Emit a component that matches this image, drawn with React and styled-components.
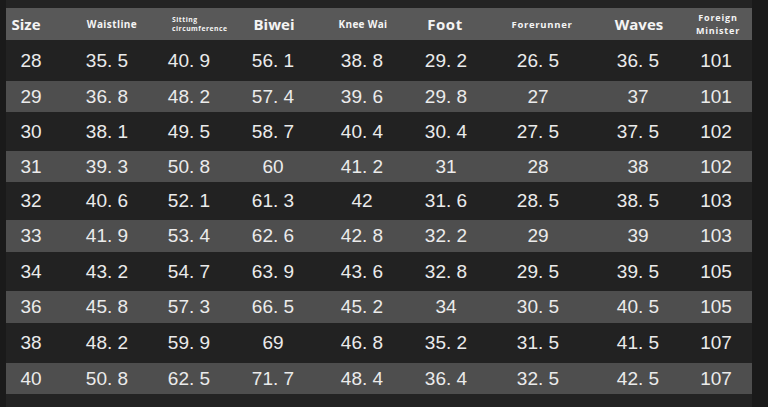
import React from 'react';
import styled, { createGlobalStyle } from 'styled-components';

const GlobalStyle = createGlobalStyle`
    html, body {
        margin: 0;
        padding: 0;
        background: #1a1a1a;
    }
`;

// 열 너비: 값의 중앙이 원본과 맞도록 잡음
const COLS = '50px 102px 62px 106px 72px 96px 88px 112px 44px 1fr';

const Frame = styled.div`
    width: 746px;
    margin-left: 6px;
    padding: 8px 0 13px;
    background: #232323;
    font-family: 'Liberation Sans', Arial, sans-serif;
    color: #ececec;
`;

const HeadRow = styled.div`
    display: grid;
    grid-template-columns: ${COLS};
    height: 32px;
    background: #585858;
    align-items: center;
`;

const HeadCell = styled.div`
    display: flex;
    flex-direction: column;
    align-items: ${(p) => (p.$left ? 'flex-start' : 'center')};
    justify-content: center;
    padding-left: ${(p) => (p.$shift > 0 ? p.$shift * 2 : 0)}px;
    padding-right: ${(p) => (p.$shift < 0 ? -p.$shift * 2 : 0)}px;
    font-family: 'Open Sans', 'Noto Sans', sans-serif;
    font-weight: 700;
    font-size: ${(p) => p.$size}px;
    letter-spacing: ${(p) => p.$spacing || 0}px;
    line-height: normal;
    color: #f4f4f4;
    white-space: nowrap;
`;

const Row = styled.div`
    display: grid;
    grid-template-columns: ${COLS};
    height: ${(p) => p.$h}px;
    background: ${(p) => (p.$alt ? '#4e4e4e' : '#222222')};
    align-items: center;
`;

const Cell = styled.div`
    text-align: center;
    font-size: 19px;
    color: #ebebeb;
    white-space: pre;
`;

const heads = [
    { label: ['Size'], size: 15, shift: -5 },
    { label: ['Waistline'], size: 10, spacing: 0.4, shift: 5 },
    { label: ['Sitting', 'circumference'], size: 6.8, spacing: 0.5, left: true, shift: 7 },
    { label: ['Biwei'], size: 15, shift: 1 },
    { label: ['Knee Wai'], size: 10, spacing: 0.3, shift: 1 },
    { label: ['Foot'], size: 15, spacing: 0.6, shift: -1 },
    { label: ['Forerunner'], size: 9.5, spacing: 0.7, shift: 4 },
    { label: ['Waves'], size: 15, shift: 1 },
    { label: ['Foreign', 'Minister'], size: 9, spacing: 0.8, shift: 2 },
];

const rows = [
    ['28', '35. 5', '40. 9', '56. 1', '38. 8', '29. 2', '26. 5', '36. 5', '101'],
    ['29', '36. 8', '48. 2', '57. 4', '39. 6', '29. 8', '27', '37', '101'],
    ['30', '38. 1', '49. 5', '58. 7', '40. 4', '30. 4', '27. 5', '37. 5', '102'],
    ['31', '39. 3', '50. 8', '60', '41. 2', '31', '28', '38', '102'],
    ['32', '40. 6', '52. 1', '61. 3', '42', '31. 6', '28. 5', '38. 5', '103'],
    ['33', '41. 9', '53. 4', '62. 6', '42. 8', '32. 2', '29', '39', '103'],
    ['34', '43. 2', '54. 7', '63. 9', '43. 6', '32. 8', '29. 5', '39. 5', '105'],
    ['36', '45. 8', '57. 3', '66. 5', '45. 2', '34', '30. 5', '40. 5', '105'],
    ['38', '48. 2', '59. 9', '69', '46. 8', '35. 2', '31. 5', '41. 5', '107'],
    ['40', '50. 8', '62. 5', '71. 7', '48. 4', '36. 4', '32. 5', '42. 5', '107'],
];

const heights = [41, 31, 39, 31, 38, 32, 39, 32, 40, 31];

export default function App() {
    return (
        <>
            <GlobalStyle />
            <Frame>
                <HeadRow>
                    {heads.map((h, i) => (
                        <HeadCell key={i} $size={h.size} $spacing={h.spacing} $left={h.left} $shift={h.shift}>
                            {h.label.map((l) => (
                                <span key={l}>{l}</span>
                            ))}
                        </HeadCell>
                    ))}
                </HeadRow>
                {rows.map((r, i) => (
                    <Row key={i} $alt={i % 2 === 1} $h={heights[i]}>
                        {r.map((v, j) => (
                            <Cell key={j}>{v}</Cell>
                        ))}
                    </Row>
                ))}
            </Frame>
        </>
    );
}
